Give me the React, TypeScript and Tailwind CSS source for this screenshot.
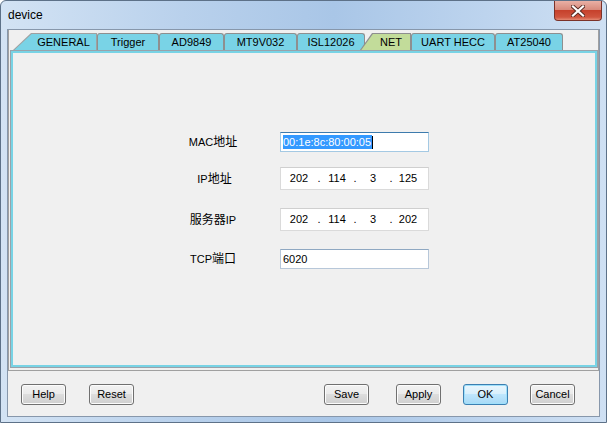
import React from 'react'

const tabs = [
  { label: 'Trigger', w: 'w-[62px]' },
  { label: 'AD9849', w: 'w-[65px]' },
  { label: 'MT9V032', w: 'w-[73px]' },
  { label: 'ISL12026', w: 'w-[68px]' },
]

const tabsAfter = [
  { label: 'UART HECC', w: 'w-[84px]' },
  { label: 'AT25040', w: 'w-[68px]' },
]

function Tab({ label, w }: { label: string; w: string }) {
  return (
    <div
      className={`${w} h-[17px] shrink-0 rounded-t-[3px] border border-b-0 border-[#8e8f8f] bg-[#79d3e6] flex items-center justify-center`}
    >
      {label}
    </div>
  )
}

function IpBox({ parts }: { parts: string[] }) {
  return (
    <div className="w-[149px] h-[23px] border border-[#dadada] border-t-[#cfcfcf] bg-white flex items-center pl-[1px]">
      <span className="w-[34px] text-center">{parts[0]}</span>
      <span className="w-[6px] text-center">.</span>
      <span className="w-[30px] text-center">{parts[1]}</span>
      <span className="w-[6px] text-center">.</span>
      <span className="w-[30px] text-center">{parts[2]}</span>
      <span className="w-[6px] text-center">.</span>
      <span className="w-[28px] text-center">{parts[3]}</span>
    </div>
  )
}

function Btn({ label, primary }: { label: string; primary?: boolean }) {
  return (
    <div
      className={
        primary
          ? 'w-[45px] h-[21px] shrink-0 rounded-[3px] border border-[#3c7fb1] bg-[linear-gradient(#eaf6fd,#d9f0fc_45%,#bee6fd_50%,#a7d9f5)] shadow-[inset_0_0_0_1px_#9fe0fb] flex items-center justify-center'
          : 'w-[45px] h-[21px] shrink-0 rounded-[3px] border border-[#707070] bg-[linear-gradient(#f2f2f2,#ebebeb_45%,#dddddd_50%,#cfcfcf)] shadow-[inset_0_0_0_1px_#fcfcfc] flex items-center justify-center'
      }
    >
      {label}
    </div>
  )
}

export default function App() {
  return (
    <div className="relative w-[607px] h-[423px] overflow-hidden rounded-t-[6px] border border-[#5d7188] bg-[linear-gradient(to_right,#d3e3f4,#b9d1ec_30%,#a9c6e7_55%,#bdd4ee_80%,#cfe0f3)] font-['Liberation_Sans','Noto_Sans_CJK_SC',sans-serif] text-[11px] text-black">
      {/* Title bar */}
      <div className="h-[28px] flex items-center pl-[7px] text-[12px]">device</div>
      <div className="absolute top-0 right-[4px] w-[48px] h-[20px] rounded-b-[4px] border border-t-0 border-[#7b3229] bg-[linear-gradient(#e9b0a5,#d88b7d_45%,#c6412c_50%,#d0553f_85%,#e48a74)] flex items-center justify-center">
        <svg width="14" height="12" viewBox="0 0 14 12">
          <path d="M2 1.5 L12 10.5 M12 1.5 L2 10.5" stroke="#5a2a22" strokeWidth="4" strokeLinecap="square" />
          <path d="M2 1.5 L12 10.5 M12 1.5 L2 10.5" stroke="#ffffff" strokeWidth="2.2" strokeLinecap="square" />
        </svg>
      </div>

      {/* Client area */}
      <div className="ml-[6px] w-[593px] h-[388px] border border-[#8797ab] bg-[#f0f0f0] flex flex-col">
        {/* Tab control */}
        <div className="h-[341px] border-x border-b border-[#a0a0a0] flex flex-col pt-[3px]">
          <div className="h-[17px] flex pl-[4px]">
            {/* GENERAL (slanted first tab) */}
            <div className="w-[84px] h-[17px] shrink-0 bg-[#a0a0a0] pt-[1px] pr-[1px] [clip-path:polygon(18px_0,100%_0,100%_100%,0_100%)]">
              <div className="h-full bg-[#79d3e6] pl-[18px] flex items-center justify-center [clip-path:polygon(18.6px_0,100%_0,100%_100%,1.4px_100%)]">
                GENERAL
              </div>
            </div>
            {tabs.map((t) => (
              <Tab key={t.label} label={t.label} w={t.w} />
            ))}
            {/* NET (selected) */}
            <div className="relative z-10 -ml-[5px] w-[51px] h-[17px] shrink-0 bg-[#8e8f8f] pt-[1px] pr-[1px] [clip-path:polygon(12px_0,100%_0,100%_100%,0_100%)]">
              <div className="h-full bg-[#c2dc9a] pl-[12px] flex items-center justify-center [clip-path:polygon(12.9px_0,100%_0,100%_100%,1.3px_100%)]">
                NET
              </div>
            </div>
            {tabsAfter.map((t) => (
              <Tab key={t.label} label={t.label} w={t.w} />
            ))}
          </div>

          {/* Panel */}
          <div className="ml-[1px] h-[318px] border border-[#9aa2aa] flex">
            <div className="flex-1 border-2 border-[#78d3e5] bg-[#f0f0f0] flex flex-col pt-[79px] pl-[170px]">
              <div className="h-[20px] flex items-center">
                <div className="w-[60px] text-center">
                  MAC<span className="text-[12px]">地址</span>
                </div>
                <div className="ml-[37px] w-[149px] h-[20px] border border-[#a4c9e3] border-t-[#3d7bad] bg-white flex items-center pl-[2px]">
                  <span className="bg-[#3399ff] text-white leading-[14px] pr-[1px]">00:1e:8c:80:00:05</span>
                  <span className="w-[1px] h-[13px] bg-black" />
                </div>
              </div>
              <div className="mt-[15px] h-[23px] flex items-center">
                <div className="w-[60px] text-center pl-[3px]">
                  IP<span className="text-[12px]">地址</span>
                </div>
                <div className="ml-[37px]">
                  <IpBox parts={['202', '114', '3', '125']} />
                </div>
              </div>
              <div className="mt-[18px] h-[23px] flex items-center">
                <div className="w-[60px] text-center">
                  <span className="text-[12px]">服务器</span>IP
                </div>
                <div className="ml-[37px]">
                  <IpBox parts={['202', '114', '3', '202']} />
                </div>
              </div>
              <div className="mt-[18px] h-[20px] flex items-center">
                <div className="w-[60px] text-center">
                  TCP<span className="text-[12px]">端口</span>
                </div>
                <div className="ml-[37px] w-[149px] h-[20px] border border-[#b7c7d9] border-t-[#8fa8c2] bg-white flex items-center pl-[2px]">
                  6020
                </div>
              </div>
            </div>
          </div>
        </div>

        {/* Buttons */}
        <div className="mt-[13px] flex pl-[13px]">
          <Btn label="Help" />
          <div className="ml-[23px]">
            <Btn label="Reset" />
          </div>
          <div className="ml-[190px] flex gap-[22px]">
            <div className="mr-[5px]">
              <Btn label="Save" />
            </div>
            <Btn label="Apply" />
            <Btn label="OK" primary />
            <Btn label="Cancel" />
          </div>
        </div>
      </div>
    </div>
  )
}
